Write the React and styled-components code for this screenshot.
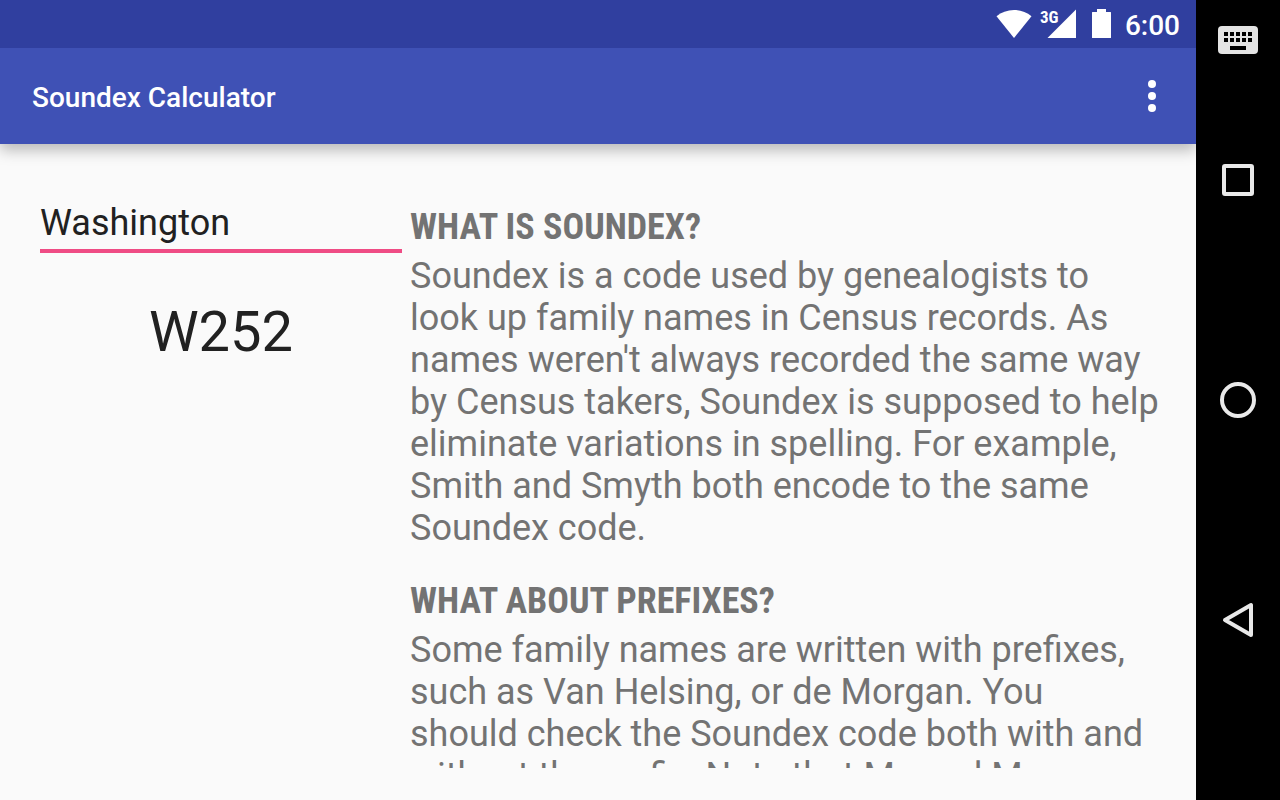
import { useState } from 'react';
import styled, { createGlobalStyle } from 'styled-components';

const GlobalStyle = createGlobalStyle`
  * {
    box-sizing: border-box;
  }

  body {
    margin: 0;
    background-color: #fafafa;
    font-family: Roboto, sans-serif;
  }
`;

const Device = styled.div`
  display: flex;
  height: 100vh;
`;

const Screen = styled.div`
  flex: 1;
  min-width: 0;
  display: flex;
  flex-direction: column;
  overflow: hidden;
`;

const StatusBar = styled.div`
  position: relative;
  z-index: 1;
  flex: none;
  height: 48px;
  display: flex;
  align-items: center;
  justify-content: flex-end;
  gap: 14px;
  padding: 0 16px;
  background-color: #303f9f;
  color: #ffffff;
`;

const StatusIcons = styled.div`
  display: flex;
  align-items: center;
  gap: 8px;
`;

const Signal = styled.div`
  position: relative;
  display: flex;
  padding-left: 7px;
  margin-right: 8px;
`;

const NetworkType = styled.span`
  position: absolute;
  left: 0;
  top: 0;
  font-family: 'Roboto Condensed', Roboto, sans-serif;
  font-size: 17px;
  font-weight: 700;
  line-height: 16px;
`;

const Clock = styled.span`
  font-size: 28px;
  font-weight: 500;
  line-height: 34px;
  padding-top: 4px;
`;

const Toolbar = styled.header`
  flex: none;
  height: 96px;
  display: flex;
  align-items: center;
  justify-content: space-between;
  padding: 0 20px 0 32px;
  background-color: #3f51b5;
  color: #ffffff;
  box-shadow: 0 6px 14px rgba(0, 0, 0, 0.27);
`;

const Title = styled.h1`
  margin: 0;
  padding-top: 4px;
  font-size: 28px;
  font-weight: 500;
  line-height: 34px;
`;

const IconButton = styled.button`
  display: flex;
  align-items: center;
  justify-content: center;
  width: 48px;
  height: 48px;
  padding: 0;
  border: none;
  background: none;
  color: inherit;
  cursor: pointer;
`;

const Content = styled.main`
  flex: 1;
  min-height: 0;
  display: grid;
  grid-template-columns: minmax(0, 1fr) minmax(0, 2fr);
  padding: 32px 30px 32px 32px;
`;

const Calculator = styled.div`
  display: flex;
  flex-direction: column;
  padding: 24px 8px 0;
`;

const NameInput = styled.input`
  width: 100%;
  height: 53px;
  padding: 0 0 4px;
  border: none;
  border-bottom: 4px solid #ef4c85;
  border-radius: 0;
  outline: none;
  background: none;
  color: #212121;
  font-family: inherit;
  font-size: 36px;
`;

const Code = styled.output`
  padding-top: 46px;
  color: #212121;
  font-size: 56px;
  line-height: 66px;
  text-align: center;
`;

const Article = styled.div`
  overflow-y: auto;
  scrollbar-width: none;
  padding: 30px 4px 0 0;
  color: #737373;
  font-size: 36px;
  line-height: 42px;
`;

const Section = styled.section`
  margin-bottom: 31px;
`;

const SectionTitle = styled.h2`
  margin: 0 0 7px;
  font-family: 'Roboto Condensed', Roboto, sans-serif;
  font-size: 36px;
  font-weight: 700;
  text-transform: uppercase;
`;

const Paragraph = styled.p`
  margin: 0;
  white-space: pre-line;
`;

const NavBar = styled.nav`
  flex: none;
  width: 84px;
  display: flex;
  flex-direction: column;
  padding: 10px 0 70px;
  background-color: #000000;
  color: #e9e9e9;
`;

const NavButton = styled(IconButton)`
  width: 100%;
  height: ${(props) => (props.$small ? '60px' : 'auto')};
  flex: ${(props) => (props.$small ? 'none' : 1)};
`;

const sections = [
  {
    title: 'What is Soundex?',
    text: "Soundex is a code used by genealogists to look up family names in Census records. As names weren't always recorded the same way by Census takers, Soundex is supposed to help eliminate variations in spelling. For example, Smith and Smyth both encode to the same Soundex code.",
  },
  {
    title: 'What about prefixes?',
    text: 'Some family names are written with prefixes, such as Van Helsing, or de Morgan. You\nshould check the Soundex code both with and without the prefix. Note that Mc and Mac are not considered prefixes.',
  },
];

const groups = {
  B: 1, F: 1, P: 1, V: 1,
  C: 2, G: 2, J: 2, K: 2, Q: 2, S: 2, X: 2, Z: 2,
  D: 3, T: 3,
  L: 4,
  M: 5, N: 5,
  R: 6,
};

function soundex(name) {
  const letters = name.toUpperCase().replace(/[^A-Z]/g, '');
  if (!letters) {
    return '';
  }

  let code = letters[0];
  let last = groups[letters[0]];
  for (const letter of letters.slice(1)) {
    // H and W do not separate letters of the same group
    if (letter === 'H' || letter === 'W') {
      continue;
    }
    const digit = groups[letter];
    if (digit && digit !== last) {
      code += digit;
    }
    last = digit;
  }
  return code.padEnd(4, '0').slice(0, 4);
}

function WifiIcon() {
  return (
    <svg width="36" height="30" viewBox="0 0 36 30" fill="currentColor" aria-hidden="true">
      <path d="M18 29 .5 7.2C5.3 3.3 11.3 1 18 1s12.7 2.3 17.5 6.2z" />
    </svg>
  );
}

function SignalIcon() {
  return (
    <svg width="29" height="30" viewBox="0 0 29 30" fill="currentColor" aria-hidden="true">
      <path d="M29 .5V29H.5z" />
    </svg>
  );
}

function BatteryIcon() {
  return (
    <svg width="19" height="30" viewBox="0 0 19 30" fill="currentColor" aria-hidden="true">
      <path d="M5 0h9v3h4.5q.5 0 .5.5v25q0 .5-.5.5H.5q-.5 0-.5-.5v-25Q0 3 .5 3H5z" />
    </svg>
  );
}

function MoreIcon() {
  return (
    <svg width="8" height="32" viewBox="0 0 8 32" fill="currentColor" aria-hidden="true">
      <circle cx="4" cy="4" r="4" />
      <circle cx="4" cy="16" r="4" />
      <circle cx="4" cy="28" r="4" />
    </svg>
  );
}

function KeyboardIcon() {
  return (
    <svg width="40" height="28" viewBox="0 0 40 28" aria-hidden="true">
      <rect width="40" height="28" rx="4" fill="#e4e4e4" />
      {[6, 12, 18, 24, 30].map((x) => (
        <path key={x} d={`M${x} 6h4v4h-4zM${x} 12h4v4h-4z`} fill="#000000" />
      ))}
      <path d="M12 20h16v4H12z" fill="#000000" />
    </svg>
  );
}

function NavIcon({ children }) {
  return (
    <svg
      width="40"
      height="40"
      viewBox="0 0 40 40"
      fill="none"
      stroke="currentColor"
      strokeWidth="4"
      strokeLinejoin="round"
      aria-hidden="true"
    >
      {children}
    </svg>
  );
}

function App() {
  const [name, setName] = useState('Washington');

  return (
    <Device>
      <GlobalStyle />
      <Screen>
        <StatusBar>
          <StatusIcons>
            <WifiIcon />
            <Signal>
              <SignalIcon />
              <NetworkType>3G</NetworkType>
            </Signal>
            <BatteryIcon />
          </StatusIcons>
          <Clock>6:00</Clock>
        </StatusBar>
        <Toolbar>
          <Title>Soundex Calculator</Title>
          <IconButton type="button" aria-label="More options">
            <MoreIcon />
          </IconButton>
        </Toolbar>
        <Content>
          <Calculator>
            <NameInput
              id="name"
              type="text"
              aria-label="Family name"
              spellCheck={false}
              value={name}
              onChange={(event) => setName(event.target.value)}
            />
            <Code htmlFor="name">{soundex(name)}</Code>
          </Calculator>
          <Article>
            {sections.map((section) => (
              <Section key={section.title}>
                <SectionTitle>{section.title}</SectionTitle>
                <Paragraph>{section.text}</Paragraph>
              </Section>
            ))}
          </Article>
        </Content>
      </Screen>
      <NavBar>
        <NavButton type="button" $small aria-label="Keyboard">
          <KeyboardIcon />
        </NavButton>
        <NavButton type="button" aria-label="Recent apps">
          <NavIcon>
            <rect x="6" y="6" width="28" height="28" rx="1" />
          </NavIcon>
        </NavButton>
        <NavButton type="button" aria-label="Home">
          <NavIcon>
            <circle cx="20" cy="20" r="16" />
          </NavIcon>
        </NavButton>
        <NavButton type="button" aria-label="Back">
          <NavIcon>
            <path d="M33 5v30L7 20z" />
          </NavIcon>
        </NavButton>
      </NavBar>
    </Device>
  );
}

export default App;
